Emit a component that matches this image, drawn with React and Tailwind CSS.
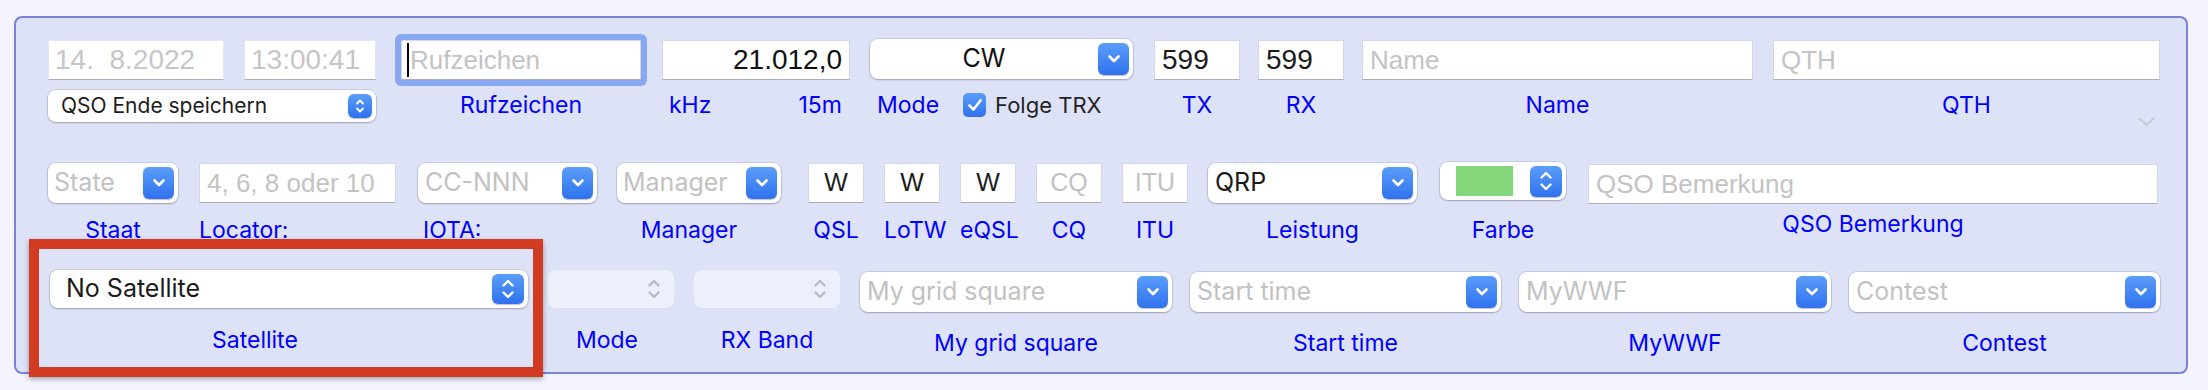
const SANS = "font-['Liberation_Sans',Arial,sans-serif]"
const UI = "font-['Inter','Noto_Sans',sans-serif]"

const fieldBox =
  "h-[40px] bg-white border border-[#d3d7e7] border-b-[#a9adc1] flex items-center px-[7px] whitespace-pre " + SANS
const popupBox =
  "rounded-[8px] bg-white shadow-[0_0_0_1px_rgba(60,70,130,0.13),0_1px_2px_rgba(0,0,0,0.22)] flex items-center pr-[4px] " + UI
const blueBtn =
  "ml-auto rounded-[6px] bg-linear-to-b from-[#5b9df9] to-[#2f71ee] shadow-[0_0.5px_1px_rgba(0,0,0,0.25)] flex items-center justify-center shrink-0"

const Label = ({ className = "", children }) => (
  <div className={"text-[23px] leading-[28px] text-[#0000ff] whitespace-nowrap " + UI + " " + className}>
    {children}
  </div>
)

const ChevronDown = () => (
  <svg width="14" height="10" viewBox="0 0 14 10" fill="none">
    <polyline
      points="2.5,2.5 7,7 11.5,2.5"
      stroke="white"
      strokeWidth="2.6"
      strokeLinecap="round"
      strokeLinejoin="round"
    />
  </svg>
)

const UpDown = ({ color = "white" }) => (
  <svg width="14" height="22" viewBox="0 0 14 22" fill="none">
    <polyline points="2.5,7.5 7,3 11.5,7.5" stroke={color} strokeWidth="2.4" strokeLinecap="round" strokeLinejoin="round" />
    <polyline points="2.5,14.5 7,19 11.5,14.5" stroke={color} strokeWidth="2.4" strokeLinecap="round" strokeLinejoin="round" />
  </svg>
)

const Combo = ({ w, placeholder, value, label, labelClass = "mt-[17px] text-center" }) => (
  <div className={"flex flex-col " + w}>
    <div className={popupBox + " h-[40px] pl-[7px]"}>
      {value ? (
        <span className="text-[25px] text-[#1c1c1c]">{value}</span>
      ) : (
        <span className="text-[25px] text-[#c2c2c2]">{placeholder}</span>
      )}
      <div className={blueBtn + " w-[31px] h-[32px]"}>
        <ChevronDown />
      </div>
    </div>
    <Label className={labelClass}>{label}</Label>
  </div>
)

const SmallField = ({ w, ml, value, placeholder, label }) => (
  <div className={"flex flex-col " + w + " " + ml}>
    <div className={fieldBox + " justify-center text-[25px] " + (value ? "text-[#1c1c1c]" : "text-[#c2c2c2]")}>
      {value || placeholder}
    </div>
    <Label className="mt-[13px] text-center">{label}</Label>
  </div>
)

const RowOne = () => (
  <div className="flex items-start h-[145px] pt-[22px] pl-[32px]">
    <div className="w-[328px] flex flex-col">
      <div className="flex gap-[20px]">
        <div className={fieldBox + " w-[176px] bg-[#f7f8fc] border-[#e3e6f1] pl-[6px] text-[28px] text-[#c6c6c6]"}>14.  8.2022</div>
        <div className={fieldBox + " w-[132px] bg-[#f7f8fc] border-[#e3e6f1] pl-[6px] text-[28px] text-[#c6c6c6]"}>13:00:41</div>
      </div>
      <div className={popupBox + " mt-[10px] h-[32px] pl-[13px]"}>
        <span className="text-[21px] text-[#1c1c1c]">QSO Ende speichern</span>
        <div className={blueBtn + " w-[24px] h-[24px] rounded-[5px]"}>
          <svg width="10" height="16" viewBox="0 0 10 16" fill="none">
            <polyline points="2,5.5 5,2.5 8,5.5" stroke="white" strokeWidth="1.8" strokeLinecap="round" strokeLinejoin="round" />
            <polyline points="2,10.5 5,13.5 8,10.5" stroke="white" strokeWidth="1.8" strokeLinecap="round" strokeLinejoin="round" />
          </svg>
        </div>
      </div>
    </div>

    <div className="ml-[25px] w-[240px] flex flex-col">
      <div className={fieldBox + " rounded-[2px] pl-[5px] shadow-[0_0_0_6px_#87a7f0] text-[26px] text-[#c3c3c3]"}>
        <span className="w-[2px] h-[34px] bg-black mr-[1px]" />
        Rufzeichen
      </div>
      <Label className="mt-[11px] text-center">Rufzeichen</Label>
    </div>

    <div className="ml-[21px] w-[188px] flex flex-col">
      <div className={fieldBox + " justify-end text-[28px] text-[#111]"}>21.012,0</div>
      <div className="mt-[11px] flex justify-between pl-[7px] pr-[8px]">
        <Label>kHz</Label>
        <Label>15m</Label>
      </div>
    </div>

    <div className="ml-[20px] -mt-[1px] w-[263px] flex flex-col">
      <div className={popupBox + " h-[40px]"}>
        <span className="flex-1 text-center text-[25px] text-[#111]">CW</span>
        <div className={blueBtn + " w-[31px] h-[32px]"}>
          <ChevronDown />
        </div>
      </div>
      <div className="mt-[12px] flex items-center h-[28px] pl-[7px]">
        <Label>Mode</Label>
        <div className="ml-[24px] w-[23px] h-[24px] rounded-[5px] bg-linear-to-b from-[#5b9df9] to-[#2f71ee] flex items-center justify-center">
          <svg width="16" height="14" viewBox="0 0 16 14" fill="none">
            <polyline points="2.5,7.5 6.5,11.5 13.5,2.5" stroke="white" strokeWidth="2.6" strokeLinecap="round" strokeLinejoin="round" />
          </svg>
        </div>
        <span className={"ml-[9px] text-[22px] leading-[28px] text-[#222] " + UI}>Folge TRX</span>
      </div>
    </div>

    <div className="ml-[21px] w-[86px] flex flex-col">
      <div className={fieldBox + " text-[28px] text-[#1c1c1c]"}>599</div>
      <Label className="mt-[11px] text-center">TX</Label>
    </div>

    <div className="ml-[18px] w-[86px] flex flex-col">
      <div className={fieldBox + " text-[28px] text-[#1c1c1c]"}>599</div>
      <Label className="mt-[11px] text-center">RX</Label>
    </div>

    <div className="ml-[18px] w-[391px] flex flex-col">
      <div className={fieldBox + " text-[26px] text-[#c3c3c3]"}>Name</div>
      <Label className="mt-[11px] text-center">Name</Label>
    </div>

    <div className="ml-[20px] w-[387px] flex flex-col">
      <div className={fieldBox + " text-[26px] text-[#c3c3c3]"}>QTH</div>
      <div className="mt-[11px] grid grid-cols-[1fr_auto_1fr] items-start">
        <div />
        <Label>QTH</Label>
        <svg className="justify-self-end mt-[26px] mr-[5px]" width="17" height="10" viewBox="0 0 17 10" fill="none">
          <polyline points="1.5,1.5 8.5,8 15.5,1.5" stroke="#c7cad3" strokeWidth="2" strokeLinecap="round" strokeLinejoin="round" />
        </svg>
      </div>
    </div>
  </div>
)

const RowTwo = () => (
  <div className="flex items-start h-[107px] pl-[32px]">
    <div className="w-[130px] flex flex-col">
      <div className={popupBox + " h-[40px] pl-[6px]"}>
        <span className="text-[25px] text-[#c2c2c2]">State</span>
        <div className={blueBtn + " w-[31px] h-[32px]"}>
          <ChevronDown />
        </div>
      </div>
      <Label className="mt-[13px] text-center">Staat</Label>
    </div>

    <div className="ml-[21px] w-[197px] flex flex-col">
      <div className={fieldBox + " text-[26px] text-[#c3c3c3]"}>4, 6, 8 oder 10</div>
      <Label className="mt-[13px]">Locator:</Label>
    </div>

    <div className="ml-[22px] w-[179px] flex flex-col">
      <div className={popupBox + " h-[40px] pl-[7px]"}>
        <span className="text-[25px] text-[#c2c2c2]">CC-NNN</span>
        <div className={blueBtn + " w-[31px] h-[32px]"}>
          <ChevronDown />
        </div>
      </div>
      <Label className="mt-[13px] pl-[5px]">IOTA:</Label>
    </div>

    <div className="ml-[20px] w-[164px] flex flex-col">
      <div className={popupBox + " h-[40px] pl-[6px]"}>
        <span className="text-[25px] text-[#c2c2c2]">Manager</span>
        <div className={blueBtn + " w-[31px] h-[32px]"}>
          <ChevronDown />
        </div>
      </div>
      <Label className="mt-[13px] text-center pr-[20px]">Manager</Label>
    </div>

    <SmallField w="w-[56px]" ml="ml-[27px]" value="W" label="QSL" />
    <SmallField w="w-[56px]" ml="ml-[20px]" value="W" label="LoTW" />
    <SmallField w="w-[56px]" ml="ml-[20px]" value="W" label="eQSL" />
    <SmallField w="w-[66px]" ml="ml-[20px]" placeholder="CQ" label="CQ" />
    <SmallField w="w-[66px]" ml="ml-[20px]" placeholder="ITU" label="ITU" />

    <div className="ml-[20px] w-[209px] flex flex-col">
      <div className={popupBox + " h-[40px] pl-[7px]"}>
        <span className="text-[25px] text-[#1c1c1c]">QRP</span>
        <div className={blueBtn + " w-[31px] h-[32px]"}>
          <ChevronDown />
        </div>
      </div>
      <Label className="mt-[13px] text-center">Leistung</Label>
    </div>

    <div className="ml-[23px] -mt-[1px] w-[126px] flex flex-col">
      <div className={popupBox + " h-[38px] pl-[16px]"}>
        <div className="w-[57px] h-[30px] bg-[#86d67b]" />
        <div className={blueBtn + " w-[32px] h-[31px]"}>
          <UpDown />
        </div>
      </div>
      <Label className="mt-[16px] text-center">Farbe</Label>
    </div>

    <div className="ml-[22px] mt-[1px] w-[570px] flex flex-col">
      <div className={fieldBox + " text-[26px] text-[#c3c3c3]"}>QSO Bemerkung</div>
      <Label className="mt-[6px] text-center">QSO Bemerkung</Label>
    </div>
  </div>
)

const RowThree = () => (
  <div className="flex items-start pl-[34px]">
    <div className="w-[478px] flex flex-col">
      <div className={popupBox + " h-[38px] pl-[16px]"}>
        <span className="text-[25px] text-[#1c1c1c]">No Satellite</span>
        <div className={blueBtn + " w-[32px] h-[30px]"}>
          <UpDown />
        </div>
      </div>
      <Label className="mt-[18px] pl-[162px]">Satellite</Label>
    </div>

    <div className="ml-[20px] w-[126px] flex flex-col">
      <div className="h-[38px] rounded-[8px] bg-[#edf0fa] flex items-center justify-end pr-[13px]">
        <UpDown color="#b8bac4" />
      </div>
      <Label className="mt-[18px] text-center pr-[8px]">Mode</Label>
    </div>

    <div className="ml-[20px] w-[146px] flex flex-col">
      <div className="h-[38px] rounded-[8px] bg-[#edf0fa] flex items-center justify-end pr-[13px]">
        <UpDown color="#b8bac4" />
      </div>
      <Label className="mt-[18px] text-center">RX Band</Label>
    </div>

    <div className="ml-[20px] mt-[2px]">
      <Combo w="w-[312px]" placeholder="My grid square" label="My grid square" />
    </div>
    <div className="ml-[18px] mt-[2px]">
      <Combo w="w-[311px]" placeholder="Start time" label="Start time" />
    </div>
    <div className="ml-[18px] mt-[2px]">
      <Combo w="w-[312px]" placeholder="MyWWF" label="MyWWF" />
    </div>
    <div className="ml-[18px] mt-[2px]">
      <Combo w="w-[311px]" placeholder="Contest" label="Contest" />
    </div>
  </div>
)

export default function App() {
  return (
    <div className="w-[2208px] h-[390px] bg-[#f3f4fd] pt-[16px] pl-[14px]">
      <div className="relative w-[2174px] h-[358px] rounded-[8px] border-2 border-[#7b80d9] bg-[#dde2f6]">
        <RowOne />
        <RowTwo />
        <RowThree />
        {/* annotation frame around the satellite field */}
        <div className="absolute left-[13px] top-[221px] w-[514px] h-[138px] border-[10px] border-[#d13b21] shadow-[0_2px_5px_rgba(0,0,0,0.35)]" />
      </div>
    </div>
  )
}
